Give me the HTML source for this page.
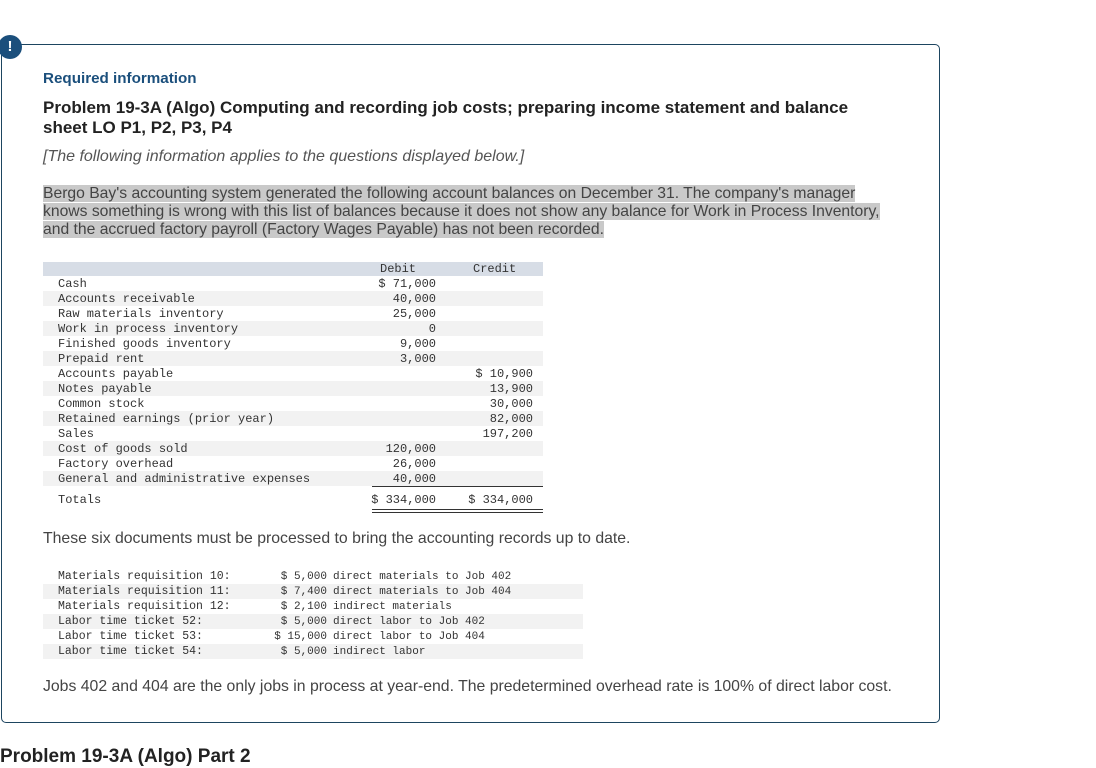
<!DOCTYPE html>
<html><head><meta charset="utf-8"><style>
body{margin:0;width:1096px;height:758px;background:#fff;position:relative;overflow:hidden;font-family:"Liberation Sans",Arial,sans-serif;color:#333}
.box{position:absolute;left:1px;top:44px;width:937px;height:677px;border:1px solid #1d4560;border-radius:5px}
.ic{position:absolute;left:-2px;top:35px;width:24px;height:24px;border-radius:50%;background:#1b4f7c;color:#fff;font-weight:bold;font-size:15px;text-align:center;line-height:24px}
.abs{position:absolute;white-space:nowrap}
.mono{font-family:"Liberation Mono","DejaVu Sans Mono",monospace;font-size:12px;color:#333}
.hl{background:#c9c9c9}
</style></head><body>
<div class="box"></div>
<div class="ic">!</div>
<div class="abs" style="left:43px;top:70px;font-size:15.2px;font-weight:bold;color:#1b4f7c">Required information</div>
<div class="abs" style="left:43px;top:98px;font-size:17px;font-weight:bold;color:#222;line-height:20px">Problem 19-3A (Algo) Computing and recording job costs; preparing income statement and balance<br>sheet LO P1, P2, P3, P4</div>
<div class="abs" style="left:43px;top:148px;font-size:16px;font-style:italic;color:#555">[The following information applies to the questions displayed below.]</div>
<div class="abs" style="left:43px;top:185px;font-size:15.7px;line-height:18px;color:#444"><span class="hl">Bergo Bay's accounting system generated the following account balances on December 31. The company's manager</span><br><span class="hl">knows something is wrong with this list of balances because it does not show any balance for Work in Process Inventory,</span><br><span class="hl">and the accrued factory payroll (Factory Wages Payable) has not been recorded.</span></div>

<div class="abs" style="left:43px;top:262px;width:500px;height:14px;background:#d7dde6"></div>
<div class="abs" style="left:43px;top:291px;width:500px;height:15px;background:#f2f2f2"></div>
<div class="abs" style="left:43px;top:321px;width:500px;height:15px;background:#f2f2f2"></div>
<div class="abs" style="left:43px;top:351px;width:500px;height:15px;background:#f2f2f2"></div>
<div class="abs" style="left:43px;top:381px;width:500px;height:15px;background:#f2f2f2"></div>
<div class="abs" style="left:43px;top:411px;width:500px;height:15px;background:#f2f2f2"></div>
<div class="abs" style="left:43px;top:441px;width:500px;height:15px;background:#f2f2f2"></div>
<div class="abs" style="left:43px;top:471px;width:500px;height:15px;background:#f2f2f2"></div>
<div class="abs" style="left:372px;top:486px;width:171px;height:1px;background:#333"></div>
<div class="abs" style="left:372px;top:509px;width:171px;height:4px;border-top:1px solid #333;border-bottom:1px solid #333;box-sizing:border-box"></div>

<div class="abs mono" style="left:58px;top:277px;line-height:15px">Cash<br>Accounts receivable<br>Raw materials inventory<br>Work in process inventory<br>Finished goods inventory<br>Prepaid rent<br>Accounts payable<br>Notes payable<br>Common stock<br>Retained earnings (prior year)<br>Sales<br>Cost of goods sold<br>Factory overhead<br>General and administrative expenses</div>
<div class="abs mono" style="left:58px;top:493px">Totals</div>
<div class="abs mono" style="left:380px;top:262px">Debit</div>
<div class="abs mono" style="left:473px;top:262px">Credit</div>
<div class="abs mono" style="left:336px;width:100px;text-align:right;top:277px;line-height:15px">$ 71,000<br>40,000<br>25,000<br>0<br>9,000<br>3,000<br>&nbsp;<br>&nbsp;<br>&nbsp;<br>&nbsp;<br>&nbsp;<br>120,000<br>26,000<br>40,000</div>
<div class="abs mono" style="left:433px;width:100px;text-align:right;top:367px;line-height:15px">$ 10,900<br>13,900<br>30,000<br>82,000<br>197,200</div>
<div class="abs mono" style="left:336px;width:100px;text-align:right;top:493px">$ 334,000</div>
<div class="abs mono" style="left:433px;width:100px;text-align:right;top:493px">$ 334,000</div>

<div class="abs" style="left:43px;top:530px;font-size:15.8px;color:#444">These six documents must be processed to bring the accounting records up to date.</div>

<div class="abs" style="left:43px;top:584px;width:540px;height:15px;background:#f2f2f2"></div>
<div class="abs" style="left:43px;top:614px;width:540px;height:15px;background:#f2f2f2"></div>
<div class="abs" style="left:43px;top:644px;width:540px;height:15px;background:#f2f2f2"></div>
<div class="abs mono" style="font-size:11.5px;left:58px;top:569px;line-height:15px">Materials requisition 10:<br>Materials requisition 11:<br>Materials requisition 12:<br>Labor time ticket 52:<br>Labor time ticket 53:<br>Labor time ticket 54:</div>
<div class="abs mono" style="font-size:11px;left:247px;width:80px;text-align:right;top:570px;line-height:15px">$ 5,000<br>$ 7,400<br>$ 2,100<br>$ 5,000<br>$ 15,000<br>$ 5,000</div>
<div class="abs mono" style="font-size:11px;left:333px;top:570px;line-height:15px">direct materials to Job 402<br>direct materials to Job 404<br>indirect materials<br>direct labor to Job 402<br>direct labor to Job 404<br>indirect labor</div>

<div class="abs" style="left:43px;top:678px;font-size:15.8px;color:#444">Jobs 402 and 404 are the only jobs in process at year-end. The predetermined overhead rate is 100% of direct labor cost.</div>
<div class="abs" style="left:0px;top:746px;font-size:19px;font-weight:bold;color:#222">Problem 19-3A (Algo) Part 2</div>
</body></html>
